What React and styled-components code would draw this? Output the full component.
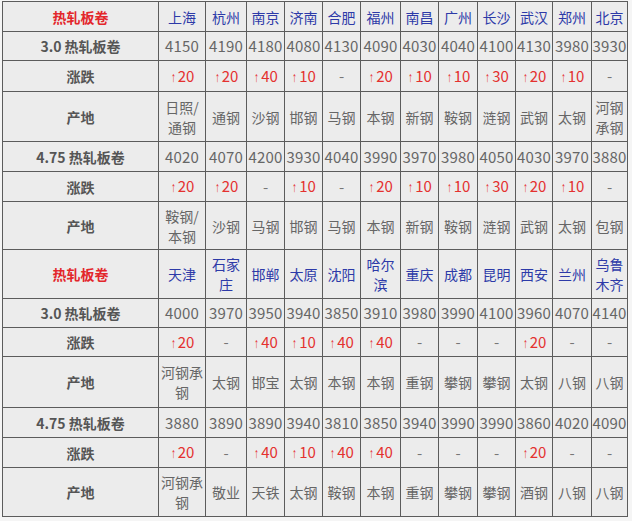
import React from 'react'
import styled, { createGlobalStyle } from 'styled-components'

const GlobalStyle = createGlobalStyle`
  html, body {
    margin: 0;
    padding: 0;
    background: #f5f5f5;
  }
  body {
    font-family: "Noto Sans CJK SC", "Noto Sans", sans-serif;
  }
`

const Page = styled.div`
  padding: 1px 0 0 2px;
`

const Table = styled.table`
  border-collapse: collapse;
  table-layout: fixed;
  width: 626px;
  background: #ececec;
`

const Row = styled.tr`
  height: ${p => p.$h}px;
`

const Cell = styled.td`
  border: 1px solid #5c5c5c;
  padding: 0;
  text-align: center;
  vertical-align: middle;
  font-size: 14px;
  line-height: 20px;
  white-space: pre-line;
  overflow: hidden;
`

const Title = styled(Cell)`
  color: #e3262b;
  font-weight: bold;
`

const Label = styled(Cell)`
  color: #555;
  font-weight: bold;
`

const City = styled(Cell)`
  color: #2d3aa8;
`

const Price = styled(Cell)`
  color: #666;
  font-size: 15px;
  letter-spacing: 0.2px;
`

const Change = styled(Cell)`
  color: ${p => (p.$up ? '#e4312f' : '#777')};
  font-size: 15px;
`

const Arrow = styled.span`
  display: inline-block;
  font-family: "Liberation Sans", "DejaVu Sans", sans-serif;
  font-size: 14px;
  transform: scaleX(0.7);
  width: 7px;
  margin-right: 1px;
`

const Origin = styled(Cell)`
  color: #666;
`

const widths = [156, 47, 41, 38, 38, 38, 40, 38, 39, 38, 37, 39, 36]

const blocks = [
  {
    cities: ['上海', '杭州', '南京', '济南', '合肥', '福州', '南昌', '广州', '长沙', '武汉', '郑州', '北京'],
    cityH: 30,
    sets: [
      {
        name: '3.0 热轧板卷',
        prices: [4150, 4190, 4180, 4080, 4130, 4090, 4030, 4040, 4100, 4130, 3980, 3930],
        changes: [20, 20, 40, 10, 0, 20, 10, 10, 30, 20, 10, 0],
        origins: ['日照/\n通钢', '通钢', '沙钢', '邯钢', '马钢', '本钢', '新钢', '鞍钢', '涟钢', '武钢', '太钢', '河钢\n承钢'],
        h: [29, 31, 50],
      },
      {
        name: '4.75 热轧板卷',
        prices: [4020, 4070, 4200, 3930, 4040, 3990, 3970, 3980, 4050, 4030, 3970, 3880],
        changes: [20, 20, 0, 10, 0, 20, 10, 10, 30, 20, 10, 0],
        origins: ['鞍钢/\n本钢', '沙钢', '马钢', '邯钢', '马钢', '本钢', '新钢', '鞍钢', '涟钢', '武钢', '太钢', '包钢'],
        h: [30, 30, 48],
      },
    ],
  },
  {
    cities: ['天津', '石家\n庄', '邯郸', '太原', '沈阳', '哈尔\n滨', '重庆', '成都', '昆明', '西安', '兰州', '乌鲁\n木齐'],
    cityH: 49,
    sets: [
      {
        name: '3.0 热轧板卷',
        prices: [4000, 3970, 3950, 3940, 3850, 3910, 3980, 3990, 4100, 3960, 4070, 4140],
        changes: [20, 0, 40, 10, 40, 40, 0, 0, 0, 20, 0, 0],
        origins: ['河钢承\n钢', '太钢', '邯宝', '太钢', '本钢', '本钢', '重钢', '攀钢', '攀钢', '太钢', '八钢', '八钢'],
        h: [29, 29, 51],
      },
      {
        name: '4.75 热轧板卷',
        prices: [3880, 3890, 3890, 3940, 3810, 3850, 3940, 3990, 3990, 3860, 4020, 4090],
        changes: [20, 0, 40, 10, 40, 40, 0, 0, 0, 20, 0, 0],
        origins: ['河钢承\n钢', '敬业', '天铁', '太钢', '鞍钢', '本钢', '重钢', '攀钢', '攀钢', '酒钢', '八钢', '八钢'],
        h: [30, 30, 49],
      },
    ],
  },
]

const App = () => {
  return (
    <Page>
      <GlobalStyle />
      <Table>
        <colgroup>
          {widths.map((w, i) => (
            <col key={i} style={{ width: w }} />
          ))}
        </colgroup>
        <tbody>
          {blocks.map((b, bi) => (
            <React.Fragment key={bi}>
              <Row $h={b.cityH}>
                <Title>热轧板卷</Title>
                {b.cities.map((c, i) => (
                  <City key={i}>{c}</City>
                ))}
              </Row>
              {b.sets.map((s, si) => (
                <React.Fragment key={si}>
                  <Row $h={s.h[0]}>
                    <Label>{s.name}</Label>
                    {s.prices.map((p, i) => (
                      <Price key={i}>{p}</Price>
                    ))}
                  </Row>
                  <Row $h={s.h[1]}>
                    <Label>涨跌</Label>
                    {s.changes.map((c, i) => (
                      <Change key={i} $up={c > 0}>
                        {c > 0 ? (
                          <>
                            <Arrow>↑</Arrow>
                            {c}
                          </>
                        ) : (
                          '-'
                        )}
                      </Change>
                    ))}
                  </Row>
                  <Row $h={s.h[2]}>
                    <Label>产地</Label>
                    {s.origins.map((o, i) => (
                      <Origin key={i}>{o}</Origin>
                    ))}
                  </Row>
                </React.Fragment>
              ))}
            </React.Fragment>
          ))}
        </tbody>
      </Table>
    </Page>
  )
}

export default App
